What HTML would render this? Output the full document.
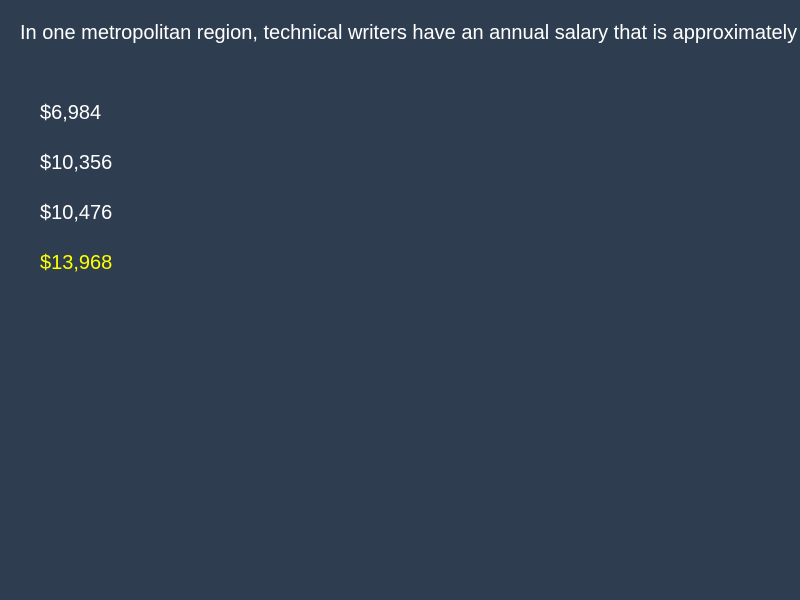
<!DOCTYPE html>
<html><head><style>
html,body{margin:0;padding:0;width:800px;height:600px;overflow:hidden;background:#2e3d50;font-family:"Liberation Sans",sans-serif;color:#fff;}
.q{position:absolute;left:20px;top:22px;width:780px;overflow:hidden;font-size:20px;white-space:nowrap;}
.o{position:absolute;left:40px;font-size:20px;white-space:nowrap;}
</style></head><body>
<div class="q">In one metropolitan region, technical writers have an annual salary that is approximately</div>
<div class="o" style="top:102px">$6,984</div>
<div class="o" style="top:152px">$10,356</div>
<div class="o" style="top:202px">$10,476</div>
<div class="o" style="top:252px;color:#ffff00">$13,968</div>
</body></html>
